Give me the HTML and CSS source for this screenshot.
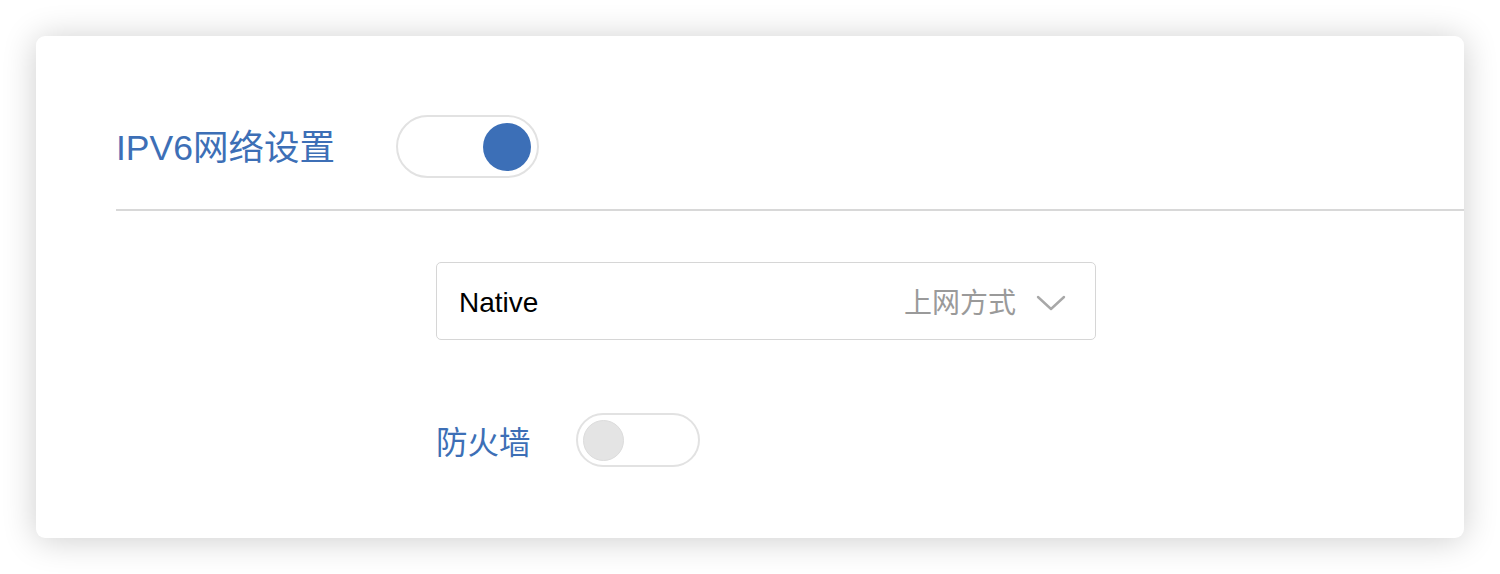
FILE: index.html
```html
<!DOCTYPE html>
<html lang="zh">
<head>
<meta charset="utf-8">
<link rel="stylesheet" href="styles.css">
</head>
<body>
<div class="card">
  <div class="head-row">
    <span class="title">IPV6网络设置</span>
    <span class="switch switch-on"><span class="knob"></span></span>
  </div>
  <div class="divider"></div>
  <div class="form">
    <div class="select">
      <span class="value">Native</span>
      <span class="placeholder">上网方式</span>
      <svg class="chevron" width="30" height="16" viewBox="0 0 30 16"><path d="M2 2 L15 14 L28 2" fill="none" stroke="#a8a8a8" stroke-width="2.4" stroke-linecap="round" stroke-linejoin="round"/></svg>
    </div>
    <div class="fw-row">
      <span class="fw-label">防火墙</span>
      <span class="switch switch-off"><span class="knob"></span></span>
    </div>
  </div>
</div>
</body>
</html>
```
FILE: styles.css
```css
html, body {
  margin: 0;
  padding: 0;
  background: #ffffff;
}
body {
  padding: 36px;
  font-family: "Liberation Sans", "Noto Sans CJK SC", sans-serif;
}
.card {
  width: 1428px;
  height: 502px;
  box-sizing: border-box;
  background: #fff;
  border-radius: 9px;
  box-shadow: 0 2px 34px rgba(0, 0, 0, 0.2);
  padding: 79px 0 0 80px;
}
.head-row {
  display: flex;
  align-items: center;
  height: 63px;
}
.title {
  font-size: 35.5px;
  color: #3d6fb6;
  margin-right: 61px;
  line-height: 1;
  padding-top: 5px;
}
.switch {
  display: flex;
  align-items: center;
  box-sizing: border-box;
  border: 2px solid #e2e2e2;
  border-radius: 999px;
  background: #fff;
}
.switch-on {
  width: 143px;
  height: 63px;
  justify-content: flex-end;
  padding-right: 6px;
}
.switch-on .knob {
  width: 48px;
  height: 48px;
  border-radius: 50%;
  background: #3c6fb7;
}
.switch-off {
  width: 124px;
  height: 54px;
  justify-content: flex-start;
  padding-left: 5px;
}
.switch-off .knob {
  width: 41px;
  height: 41px;
  border-radius: 50%;
  background: #e4e4e4;
  border: 1px solid #dcdcdc;
  box-sizing: border-box;
}
.divider {
  height: 2px;
  background: #d8d8d8;
  margin-top: 31px;
}
.form {
  padding-left: 320px;
  padding-top: 51px;
}
.select {
  width: 660px;
  height: 78px;
  box-sizing: border-box;
  border: 1.5px solid #d6d6d6;
  border-radius: 5px;
  display: flex;
  align-items: center;
  padding: 0 29px 0 22px;
}
.value {
  font-size: 28px;
  color: #000;
  flex: 1;
  padding-top: 3px;
}
.placeholder {
  font-size: 28px;
  color: #9a9a9a;
  margin-right: 20px;
}
.chevron {
  display: block;
  margin-top: 4px;
}
.fw-row {
  display: flex;
  align-items: center;
  margin-top: 73px;
}
.fw-label {
  font-size: 31.5px;
  color: #3d6fb6;
  margin-right: 45px;
  padding-top: 0;
}
```
